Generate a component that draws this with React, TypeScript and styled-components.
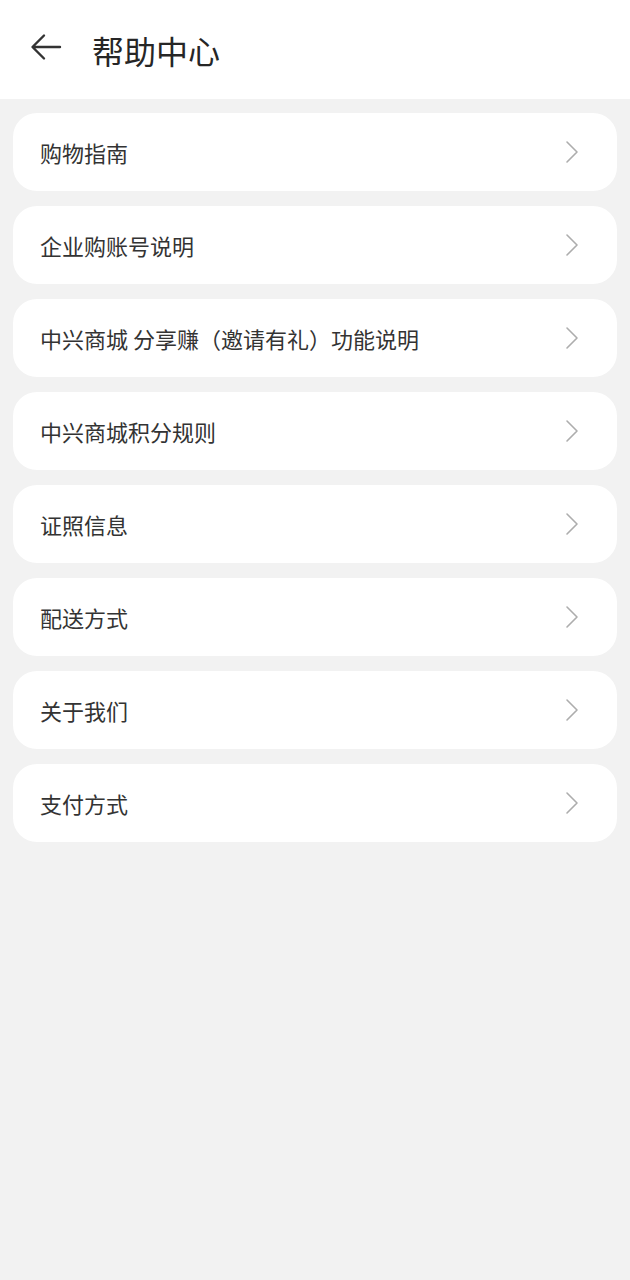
import React from 'react';
import styled, { createGlobalStyle } from 'styled-components';

const GlobalStyle = createGlobalStyle`
  html, body {
    margin: 0;
    padding: 0;
    background: #f2f2f2;
  }
  body {
    font-family: "Noto Sans CJK SC", "Noto Sans", sans-serif;
  }
`;

const Page = styled.div`
  min-height: 1280px;
  background: #f2f2f2;
`;

const Header = styled.header`
  height: 99px;
  background: #ffffff;
  display: flex;
  align-items: center;
  padding-left: 30px;
  box-sizing: border-box;
`;

const BackButton = styled.button`
  border: 0;
  background: none;
  padding: 0;
  width: 32px;
  height: 32px;
  display: flex;
  align-items: center;
  justify-content: center;
  margin-right: 30px;
  margin-top: -6px;
  color: #333333;
`;

const Title = styled.h1`
  margin: 0;
  font-size: 32px;
  font-weight: 400;
  color: #262626;
  line-height: 1;
`;

const List = styled.div`
  display: flex;
  flex-direction: column;
  gap: 15px;
  padding: 14px 13px 0;
`;

const Card = styled.div`
  height: 78px;
  background: #ffffff;
  border-radius: 24px;
  display: flex;
  align-items: center;
  justify-content: space-between;
  padding: 0 38px 0 27px;
`;

const Label = styled.span`
  font-size: 22px;
  color: #333333;
  line-height: 1;
`;

const items = [
  '购物指南',
  '企业购账号说明',
  '中兴商城 分享赚（邀请有礼）功能说明',
  '中兴商城积分规则',
  '证照信息',
  '配送方式',
  '关于我们',
  '支付方式',
];

function Chevron() {
  return (
    <svg width="14" height="24" viewBox="0 0 14 24" fill="none">
      <path d="M2 2l10 10-10 10" stroke="#adadad" strokeWidth="1.6" strokeLinecap="round" strokeLinejoin="round" />
    </svg>
  );
}

export default function App(): JSX.Element {
  return (
    <Page>
      <GlobalStyle />
      <Header>
        <BackButton aria-label="back">
          <svg width="32" height="28" viewBox="0 0 32 28" fill="none">
            <path
              d="M30 14H3M14 2.5L2.5 14 14 25.5"
              stroke="#333333"
              strokeWidth="2.4"
              strokeLinecap="round"
              strokeLinejoin="round"
            />
          </svg>
        </BackButton>
        <Title>帮助中心</Title>
      </Header>
      <List>
        {items.map((item) => (
          <Card key={item}>
            <Label>{item}</Label>
            <Chevron />
          </Card>
        ))}
      </List>
    </Page>
  );
}
